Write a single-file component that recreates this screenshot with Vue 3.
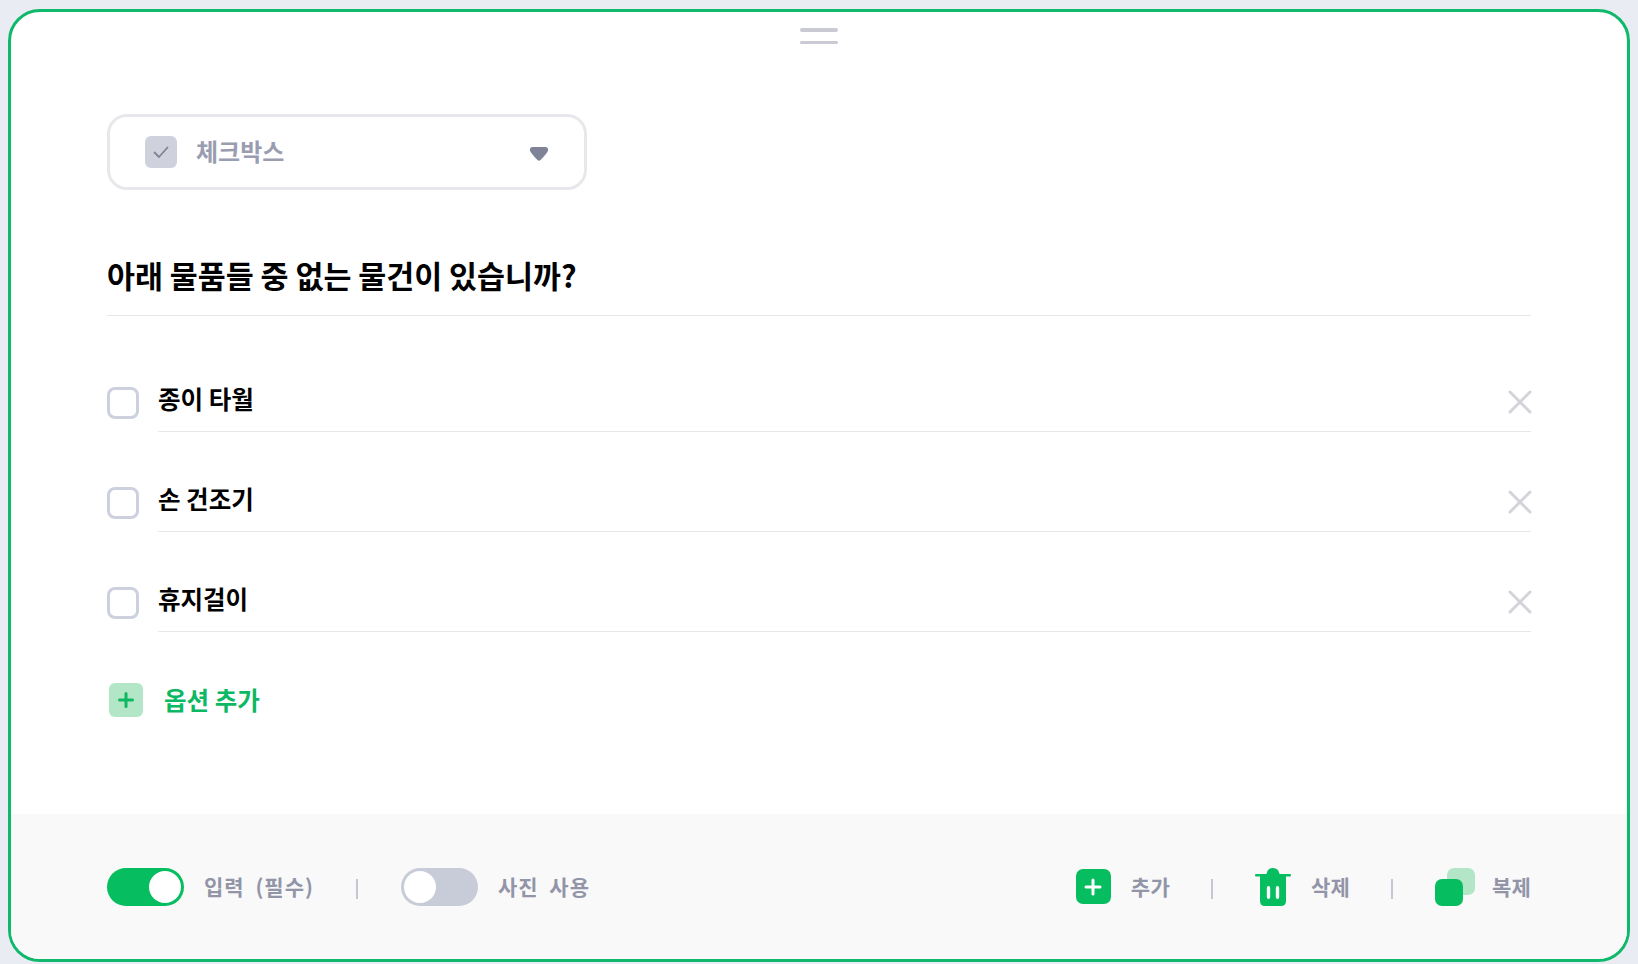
<template>
  <div class="page">
    <div class="card">
      <div class="handle">
        <span></span>
        <span></span>
      </div>

      <div class="content">
        <div class="type-select">
          <span class="type-check">
            <svg width="20" height="20" viewBox="0 0 20 20" fill="none">
              <path d="M3.5 10.5 L8 15 L16.5 5.5" stroke="#7f8498" stroke-width="1.8" stroke-linecap="round" stroke-linejoin="round" />
            </svg>
          </span>
          <span class="type-label">체크박스</span>
          <svg class="type-arrow" width="20" height="16" viewBox="0 0 20 16">
            <path d="M4 1 H16 Q19.6 1 19 4.5 Q18.5 7 11.5 14 Q10 15.5 8.5 14 Q1.5 7 1 4.5 Q0.4 1 4 1 Z" fill="#7f8398" />
          </svg>
        </div>

        <h1 class="question">아래 물품들 중 없는 물건이 있습니까?</h1>

        <ul class="options">
          <li v-for="item in options" :key="item" class="option">
            <span class="box"></span>
            <div class="option-body">
              <span class="option-text">{{ item }}</span>
              <svg class="option-x" width="24" height="24" viewBox="0 0 24 24" fill="none">
                <path d="M2 2 L22 22 M22 2 L2 22" stroke="#d2d4da" stroke-width="3" stroke-linecap="round" />
              </svg>
            </div>
          </li>
        </ul>

        <div class="add-option">
          <span class="add-icon">
            <svg width="18" height="18" viewBox="0 0 18 18" fill="none">
              <path d="M9 2.5 V15.5 M2.5 9 H15.5" stroke="#0cb863" stroke-width="3" stroke-linecap="round" />
            </svg>
          </span>
          <span class="add-text">옵션 추가</span>
        </div>
      </div>

      <div class="footer">
        <div class="footer-group left">
          <div class="tool">
            <span class="toggle on"><i></i></span>
            <span class="tool-label">입력 (필수)</span>
          </div>
          <span class="sep"></span>
          <div class="tool">
            <span class="toggle"><i></i></span>
            <span class="tool-label">사진 사용</span>
          </div>
        </div>

        <div class="footer-group">
          <div class="tool">
            <span class="plus-icon">
              <svg width="20" height="20" viewBox="0 0 20 20" fill="none">
                <path d="M10 3 V17 M3 10 H17" stroke="#fff" stroke-width="3" stroke-linecap="round" />
              </svg>
            </span>
            <span class="tool-label">추가</span>
          </div>
          <span class="sep"></span>
          <div class="tool">
            <svg width="36" height="38" viewBox="0 0 36 38">
              <path d="M11.5 6 Q12.5 0 18 0 Q23.5 0 24.5 6 L35 6 Q36 6 36 7.2 Q36 8.4 35 8.4 L1 8.4 Q0 8.4 0 7.2 Q0 6 1 6 Z" fill="#06bd5f" />
              <path fill-rule="evenodd" d="M5 8 H31 V33 Q31 38 26 38 H10 Q5 38 5 33 Z M13.5 18 Q15.2 18 15.2 20 V29 Q15.2 31 13.5 31 Q11.8 31 11.8 29 V20 Q11.8 18 13.5 18 Z M22.5 18 Q24.2 18 24.2 20 V29 Q24.2 31 22.5 31 Q20.8 31 20.8 29 V20 Q20.8 18 22.5 18 Z" fill="#06bd5f" />
            </svg>
            <span class="tool-label">삭제</span>
          </div>
          <span class="sep"></span>
          <div class="tool">
            <span class="copy-icon"><i></i><b></b></span>
            <span class="tool-label">복제</span>
          </div>
        </div>
      </div>
    </div>
  </div>
</template>

<script setup>
const options = ['종이 타월', '손 건조기', '휴지걸이']
</script>

<style>
html, body {
  margin: 0;
  background: #e9ecf2;
}
</style>

<style scoped>
.page {
  box-sizing: border-box;
  height: 964px;
  padding: 9px 8px 2px;
  font-family: "Noto Sans CJK KR", "Noto Sans", sans-serif;
  overflow: hidden;
}

.card {
  box-sizing: border-box;
  height: 100%;
  display: flex;
  flex-direction: column;
  background: #fff;
  border: 3px solid #0fb86a;
  border-radius: 32px;
  overflow: hidden;
}

.handle {
  display: flex;
  flex-direction: column;
  align-items: center;
  gap: 9px;
  padding-top: 16px;
}

.handle span {
  width: 38px;
  height: 3.5px;
  border-radius: 2px;
  background: #c9cad3;
}

.content {
  padding: 70px 96px 0;
}

.type-select {
  box-sizing: border-box;
  width: 480px;
  height: 76px;
  display: flex;
  align-items: center;
  padding: 0 35px;
  border: 3px solid #e8e8ec;
  border-radius: 20px;
}

.type-check {
  width: 32px;
  height: 32px;
  display: flex;
  align-items: center;
  justify-content: center;
  border-radius: 6px;
  background: #cfd1dc;
}

.type-label {
  margin-left: 19px;
  margin-top: -2px;
  font-size: 24px;
  font-weight: 700;
  line-height: 32px;
  color: #9a9db0;
}

.type-arrow {
  margin-left: auto;
  margin-top: 3px;
}

.question {
  margin: 0;
  padding: 62px 0 17px;
  font-size: 30.4px;
  font-weight: 700;
  line-height: 46px;
  color: #000;
  border-bottom: 1.5px solid #e8e8ea;
}

.options {
  list-style: none;
  margin: 16px 0 0;
  padding: 0;
}

.option {
  height: 100px;
  display: flex;
  gap: 19px;
}

.box {
  box-sizing: border-box;
  flex: none;
  width: 32px;
  height: 32px;
  margin-top: 55px;
  background: #fff;
  border: 3px solid #cdd0de;
  border-radius: 8px;
}

.option-body {
  flex: 1;
  box-sizing: border-box;
  display: flex;
  align-items: center;
  justify-content: space-between;
  padding-top: 40px;
  border-bottom: 1.5px solid #e8e8ea;
}

.option-text {
  font-size: 24.5px;
  font-weight: 700;
  line-height: 36px;
  color: #000;
  margin-top: -6px;
}

.option-x {
  margin-right: -1px;
}

.add-option {
  display: flex;
  align-items: center;
  gap: 21px;
  margin-top: 51px;
  padding-left: 2px;
}

.add-icon {
  width: 34px;
  height: 34px;
  display: flex;
  align-items: center;
  justify-content: center;
  border-radius: 6px;
  background: #b3e6c7;
}

.add-text {
  font-size: 24.5px;
  font-weight: 700;
  line-height: 34px;
  color: #0cb863;
}

.footer {
  flex: 1;
  display: flex;
  align-items: center;
  justify-content: space-between;
  margin-top: 97px;
  padding: 0 96px;
  background: #f9f9f9;
}

.footer-group {
  display: flex;
  align-items: center;
  gap: 41.5px;
}

.footer-group.left {
  gap: 42.5px;
}

.tool {
  display: flex;
  align-items: center;
  gap: 20px;
}

.tool-label {
  margin-top: -2px;
  font-size: 21px;
  font-weight: 700;
  line-height: 32px;
  letter-spacing: 0.2px;
  word-spacing: 5px;
  color: #9295a8;
}

.left .tool-label {
  letter-spacing: 1px;
}

.sep {
  width: 2px;
  height: 20px;
  margin-top: 4px;
  background: #c5c8d4;
}

.toggle {
  box-sizing: border-box;
  width: 77px;
  height: 38px;
  display: flex;
  align-items: center;
  padding: 3px;
  border-radius: 19px;
  background: #c8ccd9;
}

.toggle i {
  width: 32px;
  height: 32px;
  border-radius: 50%;
  background: #fff;
}

.toggle.on {
  justify-content: flex-end;
  background: #06bd5f;
}

.plus-icon {
  width: 35px;
  height: 35px;
  display: flex;
  align-items: center;
  justify-content: center;
  border-radius: 7px;
  background: #06bd5f;
}

.copy-icon {
  position: relative;
  width: 40px;
  height: 38px;
  margin-right: -3px;
}

.copy-icon i,
.copy-icon b {
  position: absolute;
  border-radius: 7px;
}

.copy-icon i {
  top: 0;
  right: 0;
  width: 28px;
  height: 27px;
  background: #b3e6c7;
}

.copy-icon b {
  left: 0;
  bottom: 0;
  width: 28px;
  height: 27px;
  background: #06bd5f;
}
</style>
